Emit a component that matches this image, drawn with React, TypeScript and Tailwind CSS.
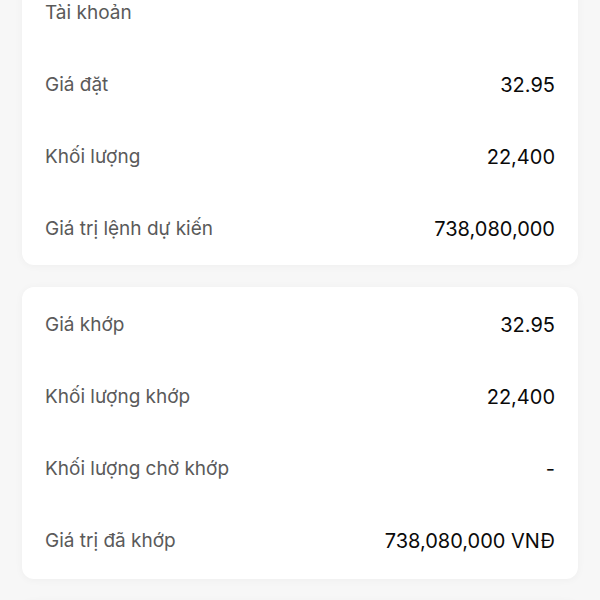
const CARDS: { label: string; value: string }[][] = [
  [
    { label: "Tài khoản", value: "" },
    { label: "Giá đặt", value: "32.95" },
    { label: "Khối lượng", value: "22,400" },
    { label: "Giá trị lệnh dự kiến", value: "738,080,000" },
  ],
  [
    { label: "Giá khớp", value: "32.95" },
    { label: "Khối lượng khớp", value: "22,400" },
    { label: "Khối lượng chờ khớp", value: "-" },
    { label: "Giá trị đã khớp", value: "738,080,000 VNĐ" },
  ],
];

export default function App() {
  return (
    <main
      className="flex h-[600px] flex-col gap-[22px] overflow-hidden bg-[#f7f7f7] px-[22px]"
      style={{ fontFamily: "Inter, 'Noto Sans', sans-serif" }}
    >
      {CARDS.map((rows, i) => (
        <section
          key={i}
          className={`flex shrink-0 flex-col rounded-xl bg-white px-[23px] py-[2px] shadow-[0_1px_8px_rgba(0,0,0,0.04)] ${
            i === 0 ? "-mt-[25px] pb-0" : ""
          }`}
        >
          {rows.map(({ label, value }) => (
            <div key={label} className="flex h-[72px] items-center justify-between">
              <span className="text-[19px] text-[#5a5a5a]">{label}</span>
              <span className="text-[20px] text-[#0a0a0a]">{value}</span>
            </div>
          ))}
        </section>
      ))}
      <section className="h-[80px] shrink-0 rounded-xl bg-white shadow-[0_1px_8px_rgba(0,0,0,0.04)]" />
    </main>
  );
}
